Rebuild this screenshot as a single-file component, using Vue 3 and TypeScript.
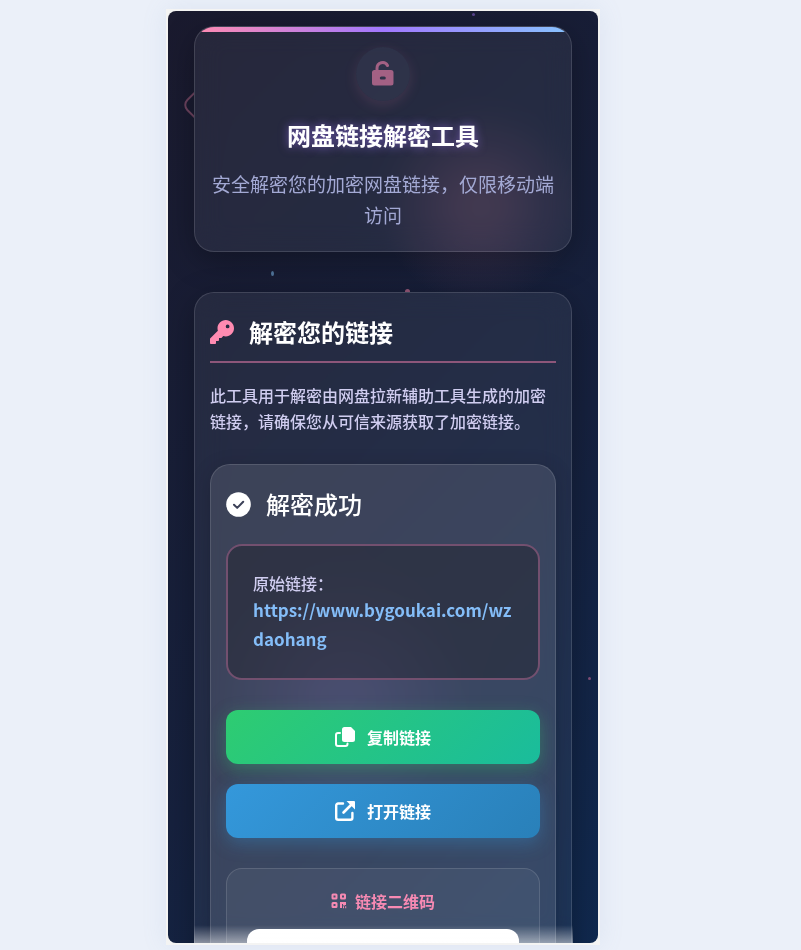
<script setup lang="ts">
interface Action {
  id: string
  label: string
}

const actions: Action[] = [
  { id: 'copy', label: '复制链接' },
  { id: 'open', label: '打开链接' },
]

const originalLink = 'https://www.bygoukai.com/wzdaohang'

function run(id: string): void {
  if (id === 'copy') navigator.clipboard?.writeText(originalLink)
  else window.open(originalLink)
}
</script>

<template>
  <div class="stage">
    <main class="device">
      <div class="screen">
        <div class="scenery" aria-hidden="true">
          <span class="glow glow-warm"></span>
          <span class="glow glow-violet"></span>
          <span class="edge"><span class="diamond"></span></span>
          <span class="dot dot-a"></span>
          <span class="dot dot-b"></span>
          <span class="dot dot-c"></span>
          <span class="dot dot-d"></span>
        </div>

        <header class="card hero">
          <div class="badge">
            <svg width="24" height="26" viewBox="0 0 24 26" fill="none">
              <path d="M6 11V7.200a5.600 5.600 0 0 1 10.500-2.700" stroke="currentColor" stroke-width="3" stroke-linecap="round" />
              <path fill-rule="evenodd" fill="currentColor" d="M3.500 9h16.500A2.500 2.500 0 0 1 22.500 11.500V22a2.500 2.500 0 0 1-2.500 2.500H3.500A2.500 2.500 0 0 1 1 22V11.500A2.500 2.500 0 0 1 3.500 9zM10.300 15.500a1.500 1.500 0 0 0 0 3h3a1.500 1.500 0 0 0 0-3z" />
            </svg>
          </div>
          <h1>网盘链接解密工具</h1>
          <p>安全解密您的加密网盘链接，仅限移动端访问</p>
        </header>

        <section class="card body">
          <h2>
            <svg class="pink" width="24" height="24" viewBox="0 0 512 512" fill="currentColor">
              <path d="M336 352c97.200 0 176-78.800 176-176S433.200 0 336 0S160 78.800 160 176c0 18.700 2.900 36.800 8.300 53.700L7 391c-4.500 4.500-7 10.600-7 17v80c0 13.300 10.700 24 24 24h80c13.300 0 24-10.700 24-24V448h40c13.300 0 24-10.700 24-24V384h40c6.400 0 12.500-2.500 17-7l33.300-33.300c16.900 5.400 35 8.300 53.700 8.300zM376 96a40 40 0 1 1 0 80 40 40 0 1 1 0-80z" />
            </svg>
            <span>解密您的链接</span>
          </h2>
          <p class="intro">此工具用于解密由网盘拉新辅助工具生成的加密链接，请确保您从可信来源获取了加密链接。</p>

          <div class="result">
            <h3>
              <svg width="25" height="25" viewBox="0 0 25 25">
                <circle cx="12.500" cy="12.500" r="12.300" fill="#fff" />
                <path d="M8 12.700l3.200 3.200 6-6.200" fill="none" stroke="#3c4158" stroke-width="2" stroke-linecap="round" stroke-linejoin="round" />
              </svg>
              <span>解密成功</span>
            </h3>

            <div class="link-box">
              <span class="label">原始链接：</span>
              <a :href="originalLink">{{ originalLink }}</a>
            </div>

            <button v-for="a in actions" :key="a.id" type="button" class="action" :class="a.id" @click="run(a.id)">
              <svg v-if="a.id === 'copy'" width="20" height="20" viewBox="0 0 20 20">
                <path d="M9.500 0H16l4 4v8.500A2.500 2.500 0 0 1 17.500 15h-8A2.500 2.500 0 0 1 7 12.500v-10A2.500 2.500 0 0 1 9.500 0z" fill="#fff" />
                <path d="M5 6H3a2 2 0 0 0-2 2v9a2 2 0 0 0 2 2h7.500a2 2 0 0 0 2-2v-.500" fill="none" stroke="#fff" stroke-width="2" stroke-linecap="round" />
              </svg>
              <svg v-else width="20" height="20" viewBox="0 0 20 20" fill="none" stroke="#fff">
                <path d="M8 2.500H3.200A2 2 0 0 0 1.200 4.500v12.200a2 2 0 0 0 2 2h12.200a2 2 0 0 0 2-2V12" stroke-width="2.400" stroke-linecap="round" />
                <path d="M8.500 11.500L16 4" stroke-width="2.600" stroke-linecap="round" />
                <path d="M11.500 0H19a1 1 0 0 1 1 1v7.500z" fill="#fff" stroke="none" />
              </svg>
              <span>{{ a.label }}</span>
            </button>

            <div class="qr">
              <h4>
                <svg width="16" height="16" viewBox="0 0 16 16" fill="none" stroke="currentColor" stroke-width="2">
                  <rect x="1.500" y="1.500" width="4" height="4" rx=".5" />
                  <rect x="10" y="1.500" width="4" height="4" rx=".5" />
                  <rect x="1.500" y="10" width="4" height="4" rx=".5" />
                  <path d="M9 10h4M10 9v6M13 10v2.500M14 9v3M12 14.200h1M14.200 14.200h1" />
                </svg>
                <span>链接二维码</span>
              </h4>
              <div class="qr-code"></div>
            </div>
          </div>
        </section>
        <div class="fade" aria-hidden="true"></div>
      </div>
    </main>
  </div>
</template>

<style>
body {
  background: #ebf0f9;
}
</style>

<style scoped>
.stage {
  box-sizing: border-box;
  height: 100vh;
  min-height: 400px;
  padding: 9px 0 5px;
  display: grid;
  grid-template-columns: 166fr 434fr 201fr;
  font-family: "Noto Sans CJK SC", sans-serif;
}

.device {
  grid-column: 2;
  min-height: 0;
  padding: 2px;
  display: flex;
  background: #f4f4f3;
  box-shadow: 0 0 24px rgba(120, 150, 190, 0.12);
}

.screen {
  position: relative;
  flex: 1;
  min-width: 0;
  overflow: hidden;
  box-sizing: border-box;
  padding: 15px 26px 0;
  border-radius: 8px;
  background: linear-gradient(135deg, #1a1a2e 0%, #16213e 60%, #10294f 100%);
}

.scenery span {
  position: absolute;
}

.glow {
  border-radius: 50%;
}

.glow-warm {
  left: 212px;
  top: 95px;
  width: 200px;
  height: 200px;
  background: radial-gradient(circle, rgba(255, 139, 160, 0.16), transparent 70%);
}

.glow-violet {
  left: 40px;
  top: 550px;
  width: 270px;
  height: 270px;
  background: radial-gradient(circle, rgba(150, 110, 220, 0.15), transparent 70%);
}

.edge {
  left: 0;
  top: 0;
  bottom: 0;
  width: 26px;
  overflow: hidden;
}

.diamond {
  left: 20px;
  top: 77px;
  width: 30px;
  height: 30px;
  border: 2px solid rgba(255, 139, 177, 0.36);
  border-radius: 8px;
  transform: rotate(45deg);
}

.dot {
  border-radius: 50%;
}

.dot-a {
  left: 304px;
  top: 2px;
  width: 3px;
  height: 3px;
  background: #5a458f;
}

.dot-b {
  left: 103px;
  top: 260px;
  width: 3px;
  height: 5px;
  background: #52789f;
}

.dot-c {
  left: 237px;
  top: 278px;
  width: 5px;
  height: 3px;
  border-radius: 3px 3px 0 0;
  background: #935777;
}

.dot-d {
  left: 420px;
  top: 666px;
  width: 3px;
  height: 3px;
  background: #835079;
}

h1,
h2,
h3,
h4,
p {
  margin: 0;
}

.card {
  position: relative;
  box-sizing: border-box;
  border: 1px solid rgba(255, 255, 255, 0.13);
  border-radius: 20px;
  background: rgba(255, 255, 255, 0.06);
  box-shadow: 0 8px 32px rgba(0, 0, 0, 0.3);
  -webkit-backdrop-filter: blur(14px);
  backdrop-filter: blur(14px);
}

.hero {
  overflow: hidden;
  padding: 20px 15px;
  margin-bottom: 40px;
  text-align: center;
}

.hero::before {
  content: "";
  position: absolute;
  inset: 0 0 auto;
  height: 5px;
  background: linear-gradient(90deg, #ff8bb1, #a178ff, #88c4ff);
}

.badge {
  width: 54px;
  height: 54px;
  margin: 0 auto 16px;
  display: flex;
  align-items: center;
  justify-content: center;
  border-radius: 50%;
  color: #a36184;
  background: rgba(70, 80, 105, 0.25);
  box-shadow: 0 4px 14px rgba(255, 139, 177, 0.12);
}

h1 {
  font-size: 24px;
  line-height: 36px;
  font-weight: 700;
  color: #fff;
  text-shadow: 0 0 10px rgba(161, 120, 255, 0.6);
}

.hero p {
  margin: 15px 0 1px;
  font-size: 19px;
  line-height: 31px;
  font-weight: 400;
  color: #a3a9d4;
}

.body {
  padding: 17px 15px 40px;
}

h2,
h3 {
  display: flex;
  align-items: center;
  gap: 15px;
  font-size: 24px;
  line-height: 36px;
  color: #fff;
}

h2 {
  padding: 4px 0 11px;
  font-weight: 700;
  border-bottom: 2px solid #8d567a;
}

.pink {
  color: #ff8bb1;
}

.intro {
  margin: 19px 0 30px;
  font-size: 16px;
  line-height: 26px;
  font-weight: 500;
  color: #d0cdf0;
}

.result {
  padding: 20px 15px;
  border: 1px solid rgba(255, 255, 255, 0.13);
  border-radius: 20px;
  background: rgba(255, 255, 255, 0.11);
  box-shadow: 0 4px 20px rgba(0, 0, 0, 0.18);
}

h3 {
  height: 38px;
  margin-bottom: 21px;
  font-weight: 500;
}

.link-box {
  padding: 25px;
  margin-bottom: 30px;
  border: 2px solid #73506f;
  border-radius: 16px;
  background: rgba(30, 32, 40, 0.42);
}

.label {
  display: block;
  font-size: 16px;
  line-height: 24px;
  font-weight: 500;
  color: #d0cdf0;
}

.link-box a {
  display: block;
  font-size: 17px;
  line-height: 29px;
  font-weight: 700;
  color: #84bdf8;
  text-decoration: none;
  word-break: break-all;
}

.action {
  width: 100%;
  height: 54px;
  margin: 0 0 20px;
  padding: 0;
  display: flex;
  align-items: center;
  justify-content: center;
  gap: 12px;
  border: 0;
  border-radius: 12px;
  font-family: inherit;
  font-size: 16px;
  font-weight: 700;
  color: #fff;
  cursor: pointer;
}

.copy {
  background: linear-gradient(135deg, #2ecc71, #1abc9c);
  box-shadow: 0 5px 18px rgba(46, 204, 113, 0.35);
}

.open {
  background: linear-gradient(135deg, #3498db, #2980b9);
  box-shadow: 0 5px 18px rgba(52, 152, 219, 0.35);
}

.qr {
  margin-top: 30px;
  padding: 19px 20px;
  border: 1px solid rgba(255, 255, 255, 0.13);
  border-radius: 16px;
  background: rgba(255, 255, 255, 0.05);
}

h4 {
  display: flex;
  align-items: center;
  justify-content: center;
  gap: 8px;
  margin-bottom: 15px;
  font-size: 16px;
  line-height: 26px;
  font-weight: 700;
  color: #f78ab3;
}

.qr-code {
  aspect-ratio: 1;
  border-radius: 12px;
  background: #fff;
}

.fade {
  position: absolute;
  left: 26px;
  right: 25px;
  bottom: 0;
  height: 18px;
  background: linear-gradient(to bottom, transparent, rgba(255, 255, 255, 0.48));
}
</style>
